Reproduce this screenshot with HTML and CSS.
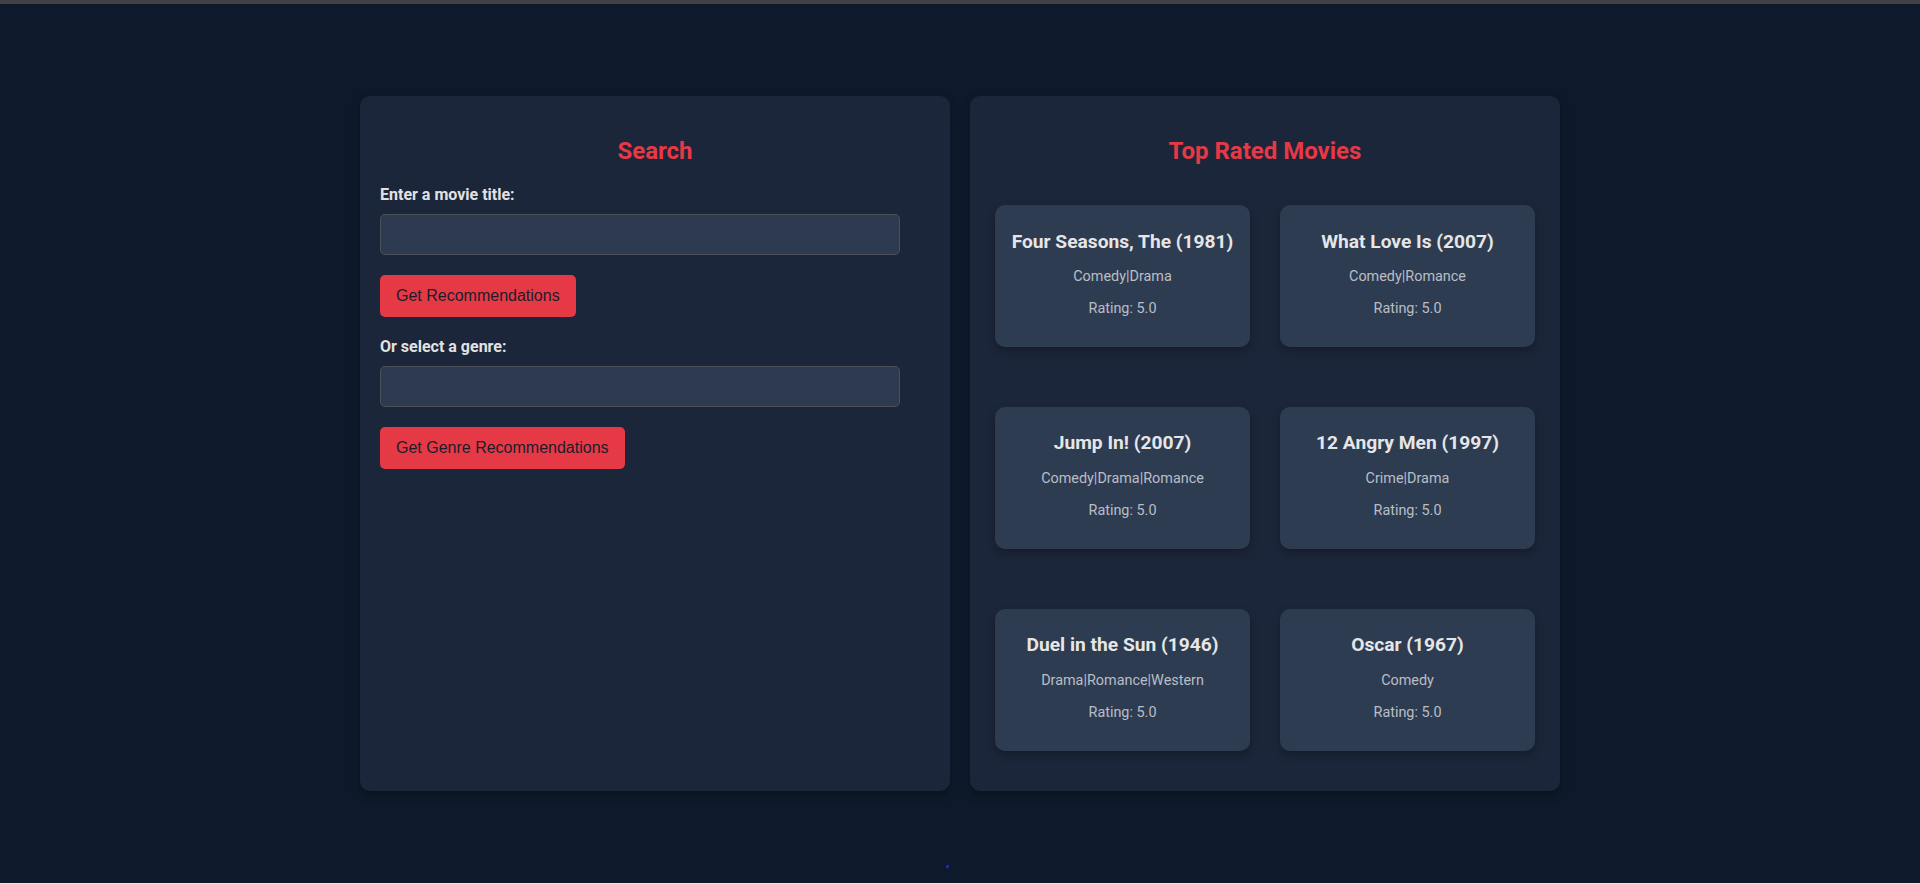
FILE: index.html
```html
<!DOCTYPE html>
<html lang="en">
<head>
<meta charset="utf-8">
<title>Movie Recommender</title>
<link rel="stylesheet" href="styles.css">
</head>
<body>
<div class="topbar"></div>
<div class="page">
  <main class="container">
    <section class="panel">
      <h2 class="panel-title">Search</h2>
      <label class="field-label" for="title">Enter a movie title:</label>
      <input class="field-input" id="title" type="text">
      <button class="btn">Get Recommendations</button>
      <label class="field-label" for="genre">Or select a genre:</label>
      <input class="field-input" id="genre" type="text">
      <button class="btn">Get Genre Recommendations</button>
    </section>
    <section class="panel">
      <h2 class="panel-title">Top Rated Movies</h2>
      <div class="grid">
        <div class="card"><h3 class="card-title">Four Seasons, The (1981)</h3><p class="card-text">Comedy|Drama</p><p class="card-text">Rating: 5.0</p></div>
        <div class="card"><h3 class="card-title">What Love Is (2007)</h3><p class="card-text">Comedy|Romance</p><p class="card-text">Rating: 5.0</p></div>
        <div class="card"><h3 class="card-title">Jump In! (2007)</h3><p class="card-text">Comedy|Drama|Romance</p><p class="card-text">Rating: 5.0</p></div>
        <div class="card"><h3 class="card-title">12 Angry Men (1997)</h3><p class="card-text">Crime|Drama</p><p class="card-text">Rating: 5.0</p></div>
        <div class="card"><h3 class="card-title">Duel in the Sun (1946)</h3><p class="card-text">Drama|Romance|Western</p><p class="card-text">Rating: 5.0</p></div>
        <div class="card"><h3 class="card-title">Oscar (1967)</h3><p class="card-text">Comedy</p><p class="card-text">Rating: 5.0</p></div>
      </div>
    </section>
  </main>
  <span class="dot"></span>
</div>
</body>
</html>
```
FILE: styles.css
```css
html {
  background: #e9e7e1;
}
body {
  margin: 0;
  font-family: Roboto, "Liberation Sans", Arial, sans-serif;
  color: #e0e0e0;
}
.topbar {
  height: 4px;
  background: #414243;
}
.page {
  position: relative;
  min-height: 879px;
  background: #0e1a2b;
  overflow: hidden;
}
.container {
  width: 1200px;
  margin: 0 auto;
  padding-top: 92px;
  display: flex;
  gap: 20px;
  align-items: stretch;
}
.panel {
  flex: 1 1 0;
  background: #1c263a;
  border-radius: 10px;
  padding: 20px;
  box-shadow: 0 4px 10px rgba(0, 0, 0, 0.3);
  display: flex;
  flex-direction: column;
  align-items: flex-start;
}
.panel-title {
  align-self: stretch;
  text-align: center;
  color: #e63946;
  font-size: 24px;
  font-weight: 700;
  margin: 21px 0 20px;
  line-height: 28px;
}
.field-label {
  display: block;
  font-size: 16px;
  font-weight: 700;
  line-height: 19px;
  color: #e2e2e2;
  margin-bottom: 10px;
}
.field-input {
  box-sizing: border-box;
  width: 520px;
  height: 41px;
  padding: 10px;
  font-size: 16px;
  font-family: "Liberation Sans", Arial, sans-serif;
  background: #2d3a50;
  border: 1px solid #4b5058;
  border-radius: 5px;
  color: #e0e0e0;
  margin: 0 0 20px;
}
.btn {
  font-family: "Liberation Sans", Arial, sans-serif;
  font-size: 16px;
  height: 42px;
  padding: 0 16px;
  background: #e63946;
  color: #1b1d2c;
  border: none;
  border-radius: 5px;
  margin: 0 0 20px;
  cursor: pointer;
}
.grid {
  align-self: stretch;
  display: grid;
  grid-template-columns: 1fr 1fr;
  column-gap: 30px;
  row-gap: 60px;
  padding: 20px 5px 20px;
}
.card {
  background: #2e3c52;
  border-radius: 10px;
  padding: 15px;
  text-align: center;
  box-shadow: 0 4px 8px rgba(0, 0, 0, 0.25);
}
.card-title {
  font-size: 19.2px;
  line-height: 22.5px;
  font-weight: 700;
  color: #e6e6e6;
  margin: 10.5px 0 14.6px;
}
.card-text {
  font-size: 14.4px;
  line-height: 17px;
  color: #b9bec6;
  margin: 0 0 15.2px;
}
.dot {
  position: absolute;
  left: 946px;
  top: 861px;
  width: 3px;
  height: 3px;
  border-radius: 50%;
  background: #1f2fd0;
}
```
